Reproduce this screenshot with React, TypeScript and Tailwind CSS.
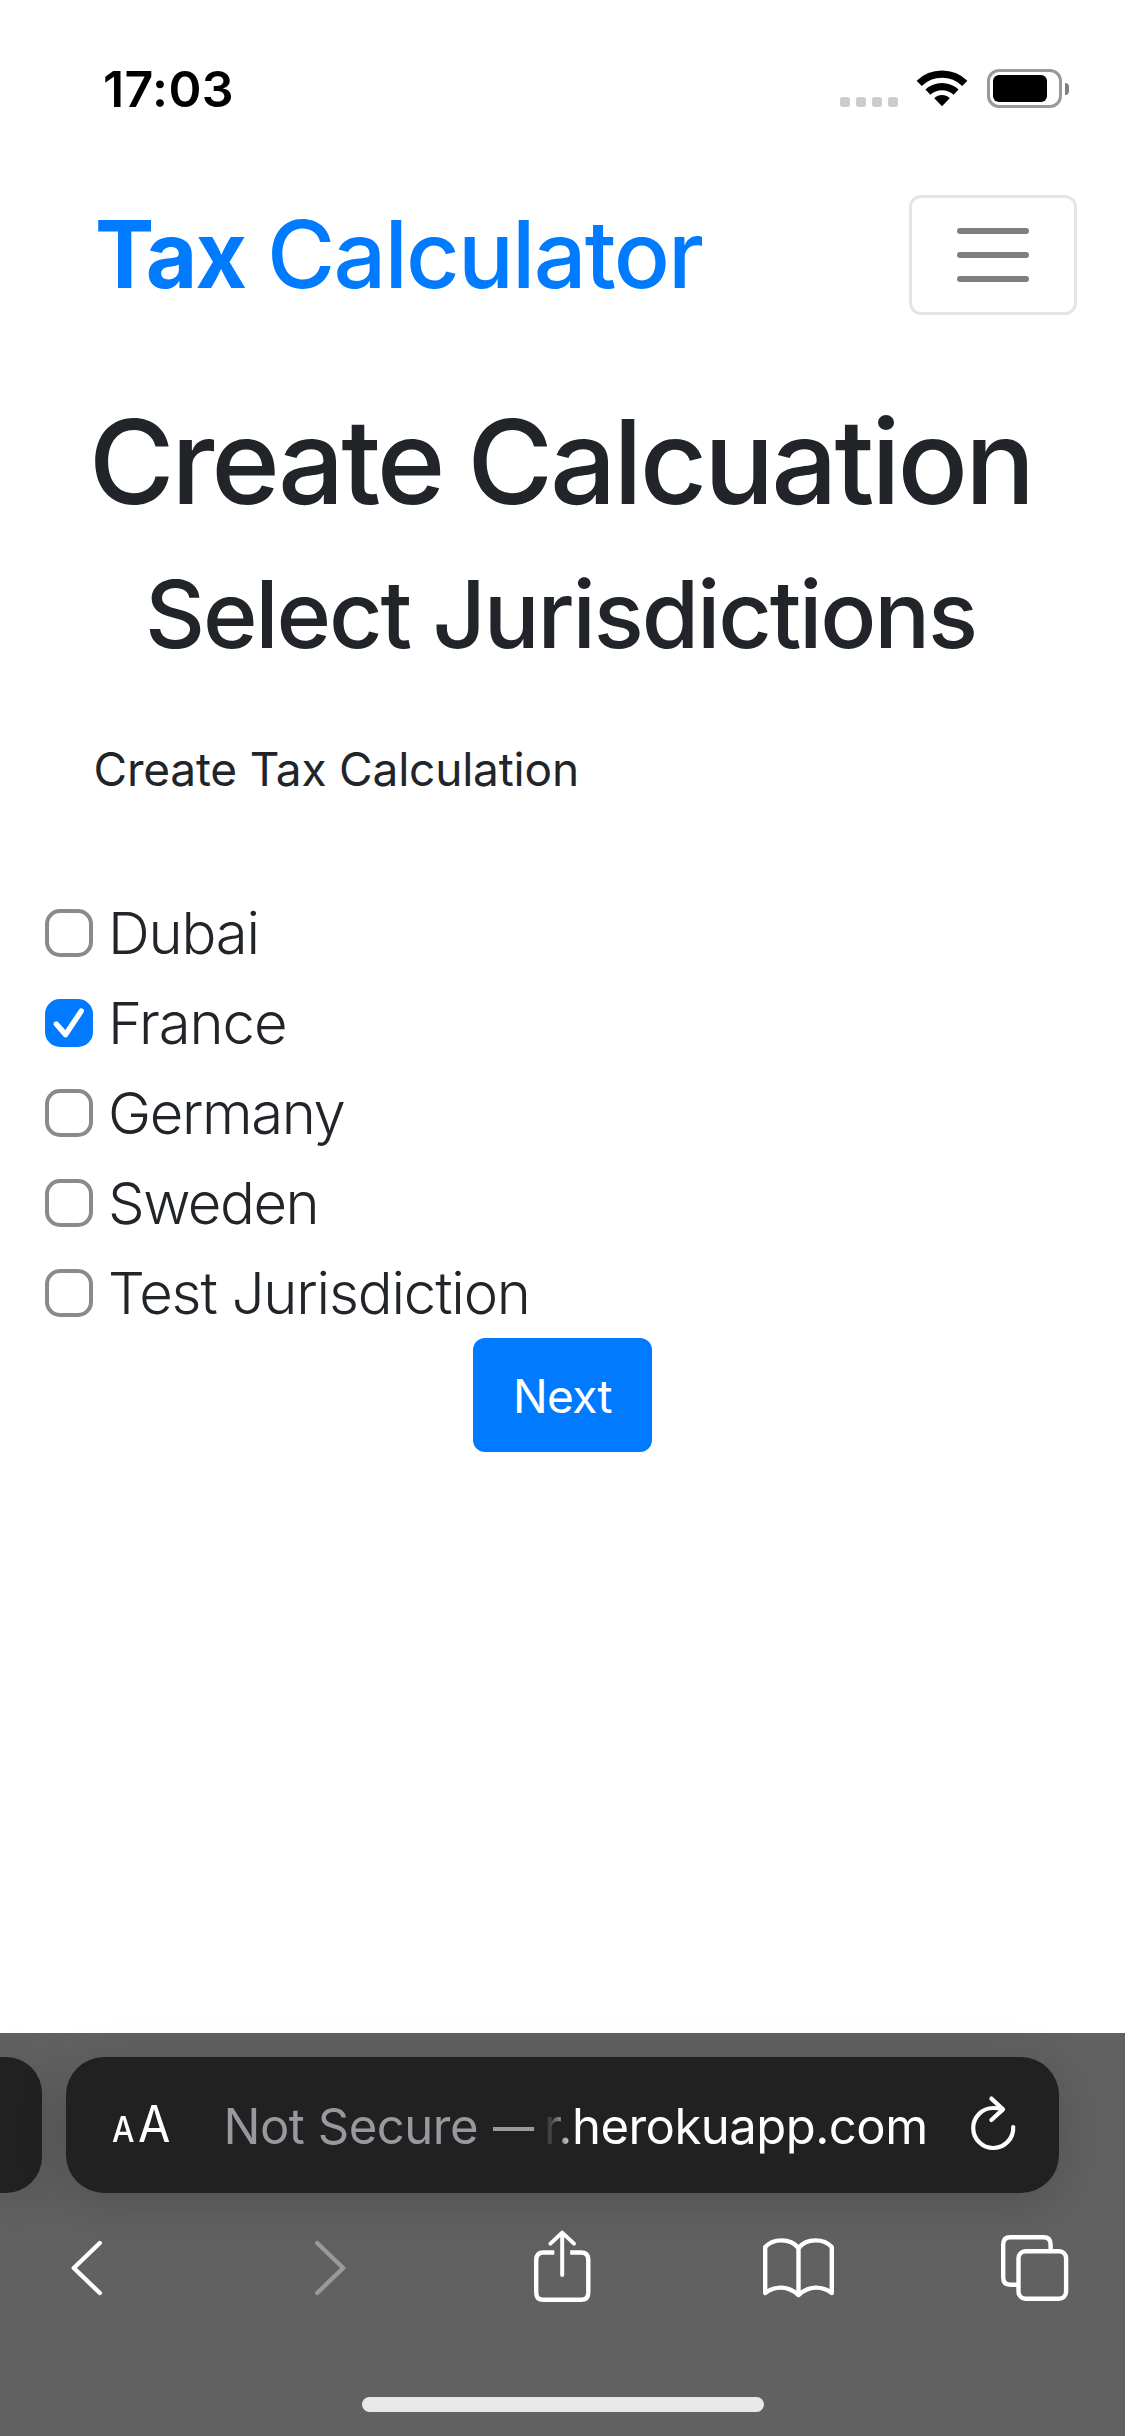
import type { ReactNode } from "react";

type Jurisdiction = { name: string; checked: boolean; tracking: string };

const jurisdictions: Jurisdiction[] = [
  { name: "Dubai", checked: false, tracking: "tracking-[-1.2px]" },
  { name: "France", checked: true, tracking: "tracking-[-1.1px]" },
  { name: "Germany", checked: false, tracking: "tracking-[-1.4px]" },
  { name: "Sweden", checked: false, tracking: "tracking-[-1.5px]" },
  { name: "Test Jurisdiction", checked: false, tracking: "tracking-[-1.17px]" },
];

function WifiIcon() {
  return (
    <svg width="52" height="40" viewBox="0 0 52 40" fill="none" stroke="#000">
      <path d="M3.2 14.3A33 33 0 0 1 48.8 14.3" strokeWidth="7.4" />
      <path d="M11.9 23.2A20.5 20.5 0 0 1 40.1 23.2" strokeWidth="7.2" />
      <path d="M18.3 29.3C22.5 25 29.5 25 33.7 29.3L26 37.2Z" fill="#000" stroke="none" />
    </svg>
  );
}

function StatusBar() {
  return (
    <div className="flex h-[195px] items-start justify-between pt-[59px] pr-[56px] pl-[103px]">
      <span className="text-[50px] leading-[60px] font-semibold tracking-[0.4px] text-black">17:03</span>
      <div className="flex pt-2.5">
        <div className="flex gap-1.5 pt-7">
          <span className="size-2.5 rounded-[3px] bg-[#cccccc]" />
          <span className="size-2.5 rounded-[3px] bg-[#cccccc]" />
          <span className="size-2.5 rounded-[3px] bg-[#cccccc]" />
          <span className="size-2.5 rounded-[3px] bg-[#cccccc]" />
        </div>
        <div className="ml-[18px]">
          <WifiIcon />
        </div>
        <div className="ml-[19px] flex items-center self-start">
          <div className="h-[39px] w-[75px] rounded-xl border-3 border-[#999999] p-[3px]">
            <div className="h-[27px] w-[54px] rounded-[6px] bg-black" />
          </div>
          <div className="ml-[3px] h-3 w-1 rounded-r-full bg-[#808080]" />
        </div>
      </div>
    </div>
  );
}

function Navbar() {
  return (
    <nav className="flex h-[120px] items-start justify-between pr-12 pl-[95px]">
      <a href="#" className="pt-[3px] text-[93px] leading-[112px] font-medium tracking-[-1.8px] whitespace-pre text-[#007bff]">
        <b className="inline-block w-[149px] origin-left scale-x-[0.955] font-bold tracking-[-2px]">Tax</b> Calculator
      </a>
      <button
        aria-label="Toggle navigation"
        className="flex h-[120px] w-[168px] flex-col items-center justify-center gap-[18px] rounded-xl border-3 border-[#e5e5e5]"
      >
        <span className="h-1.5 w-[72px] rounded-full bg-[#7f7f7f]" />
        <span className="h-1.5 w-[72px] rounded-full bg-[#7f7f7f]" />
        <span className="h-1.5 w-[72px] rounded-full bg-[#7f7f7f]" />
      </button>
    </nav>
  );
}

function CheckBox({ checked }: { checked: boolean }) {
  if (!checked) return <span className="size-12 rounded-[15px] border-4 border-[#8a8a8e]" />;
  return (
    <span className="size-12 rounded-[15px] bg-[#007aff]">
      <svg width="48" height="48" viewBox="0 0 48 48" fill="none" stroke="#fff" strokeWidth="5.4" strokeLinecap="round" strokeLinejoin="round">
        <path d="M11.3 25L20.6 35.6L36.3 12" />
      </svg>
    </span>
  );
}

function ToolbarIcon({ color = "#ffffff", children }: { color?: string; children: ReactNode }) {
  return (
    <svg width="80" height="80" viewBox="0 0 80 80" fill="none" stroke={color} strokeWidth="4.4" strokeLinecap="round" strokeLinejoin="round">
      {children}
    </svg>
  );
}

function BrowserBar() {
  return (
    <footer className="flex h-[403px] flex-col bg-[#616161]">
      <div className="flex gap-6 pt-6">
        <div className="h-[136px] w-[42px] rounded-r-[36px] bg-[#212121] shadow-[0_10px_50px_rgba(0,0,0,0.16)]" />
        <div className="flex h-[136px] w-[993px] items-center rounded-[38px] bg-[#212121] pl-[46px] text-[49px] leading-[59px] whitespace-pre shadow-[0_10px_50px_rgba(0,0,0,0.16)]">
          <span className="flex w-[111.5px] items-baseline gap-1 pt-[3px] font-medium text-white">
            <span className="inline-block w-[22px] origin-left scale-x-[0.88] text-[36px]">A</span>
            <span className="inline-block origin-left scale-x-[0.92] text-[51px] font-normal">A</span>
          </span>
          <span className="w-[269.5px] pt-[3px] tracking-[-0.47px] text-[#98989f]">Not Secure</span>
          <span className="w-[50.5px] origin-left scale-x-[0.84] pt-[3px] text-[#98989f]">—</span>
          <span className="pt-[3px] tracking-[-0.52px] text-white">
            <span className="bg-linear-to-r from-[#212121] to-[#dddddd] bg-clip-text text-transparent">r.</span>
            herokuapp.com
          </span>
          <svg
            className="mb-1 ml-[38px]"
            width="54"
            height="62"
            viewBox="0 0 54 62"
            fill="none"
            stroke="#fff"
            strokeWidth="4.2"
            strokeLinecap="round"
            strokeLinejoin="round"
          >
            <path d="M47.2 35A20 20 0 1 1 27.2 16Q32 16 36 17.2" />
            <path d="M25.4 6.6L37 17.4L25.4 28" />
          </svg>
        </div>
      </div>
      <div className="mt-[35px] flex justify-between pr-[49px] pl-12">
        <ToolbarIcon>
          <path d="M51.8 15L25.8 40L51.8 65" />
        </ToolbarIcon>
        <ToolbarIcon color="#999999">
          <path d="M32.2 15L58.2 40L32.2 65" />
        </ToolbarIcon>
        <ToolbarIcon>
          <path strokeLinecap="butt" d="M32.3 24.5H21.5Q14.2 24.5 14.2 32V64.4Q14.2 71.8 21.5 71.8H59Q66.3 71.8 66.3 64.4V32Q66.3 24.5 59 24.5H48.2" />
          <path d="M40.2 47V5M28.4 15.6L40.2 4.6L52 15.6" strokeWidth="4" />
        </ToolbarIcon>
        <ToolbarIcon>
          <path d="M6.2 65V19C14 10.5 31 9.5 39.5 20C48 9.5 65 10.5 72.8 19V65C63 57.5 50 57.5 39.5 67C29 57.5 16 57.5 6.2 65ZM39.5 20V67" />
        </ToolbarIcon>
        <ToolbarIcon>
          <rect x="22.5" y="23.2" width="47.6" height="47.6" rx="7" />
          <path strokeLinecap="butt" d="M21 56.7H14.4Q7.2 56.7 7.2 49.5V16.4Q7.2 9.2 14.4 9.2H47.4Q54.6 9.2 54.6 16.4V22" />
        </ToolbarIcon>
      </div>
      <div className="mt-[89px] h-[15px] w-[402px] self-center rounded-full bg-[#e8e8e8]" />
    </footer>
  );
}

export default function App() {
  return (
    <div className="flex h-[2436px] w-[1125px] flex-col overflow-hidden bg-white font-['Inter',sans-serif] text-[#212529]">
      <StatusBar />
      <Navbar />
      <main className="flex flex-1 flex-col">
        <h1 className="mt-[77px] pr-1 text-center text-[117px] leading-[140px] font-medium tracking-[-3.15px] [word-spacing:-3px] whitespace-nowrap">
          Create Calcuation
        </h1>
        <h2 className="mt-[26px] pr-1 text-center text-[93px] leading-[112px] font-medium tracking-[-2.2px] whitespace-nowrap">
          Select Jurisdictions
        </h2>
        <p className="mt-[71px] pl-[93.5px] text-[46px] leading-[56px] tracking-[-0.2px]">Create Tax Calculation</p>
        <ul className="mt-[91px] pl-[45px]">
          {jurisdictions.map((j) => (
            <li key={j.name} className="flex h-[90px] items-center gap-[15px]">
              <CheckBox checked={j.checked} />
              <span className={`text-[58px] leading-[70px] font-light ${j.tracking}`}>{j.name}</span>
            </li>
          ))}
        </ul>
        <button className="h-[114px] w-[179px] self-center rounded-xl bg-[#007bff] pt-px text-[46px] leading-[56px] tracking-[-0.6px] text-white">
          Next
        </button>
      </main>
      <BrowserBar />
    </div>
  );
}
